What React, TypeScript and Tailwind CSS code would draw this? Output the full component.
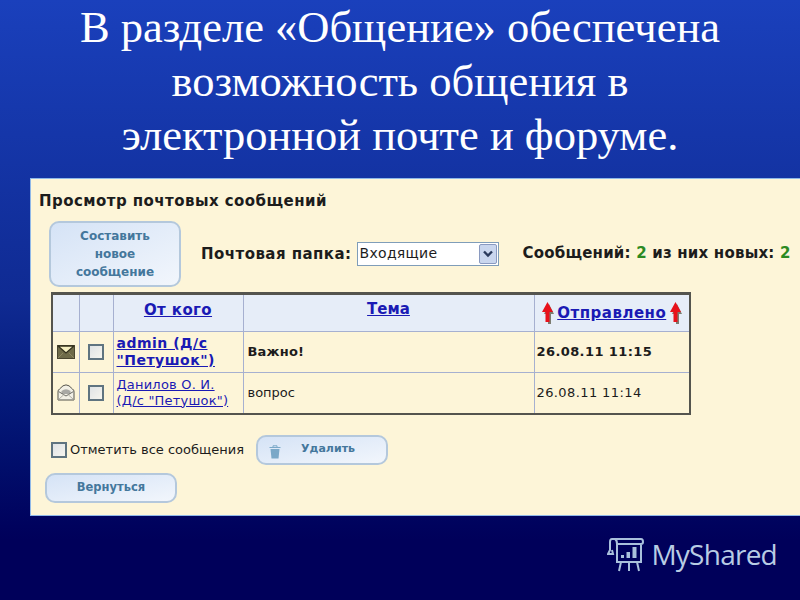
import React from "react";

const sans = "font-['DejaVu_Sans',sans-serif]";
const btn = "flex items-center justify-center rounded-[10px] border-2 border-[#b4c8dc] bg-gradient-to-br from-[#d5e3f6] to-[#f2f6fc] font-bold text-[#44779c]";

function Closed() {
  return (
    <svg width="18" height="14" viewBox="0 0 18 14">
      <rect x="0.5" y="0.5" width="17" height="13" fill="#6e6a48" stroke="#4a4630" />
      <path d="M1 1 L9 8 L17 1Z" fill="#f4eec0" />
      <path d="M1 1 H17 M1 1 L9 8 L17 1" fill="none" stroke="#35321f" strokeWidth="1.3" />
      <path d="M1 13 L6 8 M17 13 L12 8" stroke="#8c8660" fill="none" />
    </svg>
  );
}

function Opened() {
  return (
    <svg width="18" height="17" viewBox="0 0 18 17">
      <path d="M1 7.5 Q1 6 2.5 5 L6 1.8 Q9 0 12 1.8 L15.5 5 Q17 6 17 7.5 V16 H1Z" fill="#f2f0e6" stroke="#55544c" />
      <path d="M4.5 7 Q9 3.5 13.5 7 V10 H4.5Z" fill="#a8a8a4" />
      <path d="M1.5 7.5 L9 12 L16.5 7.5" fill="none" stroke="#6e6e68" />
      <path d="M1.5 15.5 L7 10.5 M16.5 15.5 L11 10.5" fill="none" stroke="#b0aea4" />
    </svg>
  );
}

function Box({ className = "" }: { className?: string }) {
  return <span className={"block w-[16px] h-[16px] border-2 border-[#5f7480] bg-gradient-to-br from-[#dfe3e6] to-[#f6f5ee] " + className} />;
}

function Arrow() {
  return (
    <svg width="13" height="24" viewBox="0 0 13 24" className="shrink-0">
      <path d="M8 3 L13 13 L10 13 L10 23 L7 23 L7 13 L3 13Z" fill="#7c7c70" />
      <path d="M6.5 1 L12 11 L8.5 11 L8.5 21 L4.5 21 L4.5 11 L1 11Z" fill="#e8111a" />
    </svg>
  );
}

function Logo() {
  return (
    <svg width="38" height="38" viewBox="0 0 38 38" fill="none" stroke="#a9c0dc" strokeWidth="2" className="shrink-0">
      <path d="M5 4 H34 Q36 4 36 7 Q36 9 34 9 H10 M5 4 Q3 4 3 7 V15 L1 19 H6 L5 15 M8 4 Q10 5 10 9 V27 H34 V9" />
      <path d="M14 27 L12 36 M22 27 V36 M30 27 L32 36" />
      <rect x="14" y="20" width="3" height="3" fill="#a9c0dc" stroke="none" />
      <rect x="19.5" y="17" width="3.5" height="6" fill="#a9c0dc" stroke="none" />
      <rect x="25.5" y="12" width="4" height="11" fill="#a9c0dc" stroke="none" />
    </svg>
  );
}

const cell = "border border-[#a6b0d0]";
const link = "text-[#1a1ab4] underline";

export default function App() {
  return (
    <div className="w-[800px] h-[600px] overflow-hidden flex flex-col bg-gradient-to-b from-[#1a40bc] via-[#0f2a92] via-50% to-[#00005a] to-90%">
      <h1 className="h-[178px] font-['Liberation_Serif',serif] font-normal text-white text-center text-[44.5px] leading-[54px] whitespace-nowrap">
        В разделе «Общение» обеспечена
        <br />
        возможность общения в
        <br />
        электронной почте и форуме.
      </h1>

      <div className={"ml-[30px] w-[770px] h-[338px] shrink-0 border border-[#8fb8e8] border-r-0 bg-[#fdf5d8] pl-[8px] pt-[14px] text-[#1c1c1c] " + sans}>
        <div className="text-[15px] font-bold leading-[17px] tracking-[0.45px] whitespace-nowrap">Просмотр почтовых сообщений</div>

        <div className="flex items-center mt-[11px] ml-[10px]">
          <div className={btn + " w-[132px] h-[66px] text-[12px] leading-[18px] text-center"}>
            Составить
            <br />
            новое
            <br />
            сообщение
          </div>
          <span className="ml-[20px] mt-[1px] text-[15px] tracking-[0.45px] font-bold whitespace-nowrap">Почтовая папка:</span>
          <div className="ml-[5px] mt-[-1px] w-[142px] h-[24px] border border-[#7f9db9] bg-white flex items-center justify-between">
            <span className="pl-[2px] text-[14px] tracking-[0.3px]">Входящие</span>
            <span className="w-[18px] h-[20px] mr-[1px] rounded-[2px] border border-[#8a9ac0] bg-[#c9d6ee] flex items-center justify-center">
              <svg width="10" height="8" viewBox="0 0 10 8"><path d="M1 1.5 L5 5.5 L9 1.5" fill="none" stroke="#2a3a5c" strokeWidth="2.4" /></svg>
            </span>
          </div>
          <span className="ml-[24px] mt-[-1px] text-[15px] tracking-[0.2px] font-bold whitespace-nowrap">
            Сообщений: <span className="text-[#2c8a22]">2</span> из них новых: <span className="text-[#2c8a22]">2</span>
          </span>
        </div>

        <table className="mt-[5px] ml-[12px] w-[638px] h-[120px] table-fixed border-collapse border-2 border-t-[3px] border-[#54544e] text-[13px]">
          <colgroup>
            <col className="w-[27px]" />
            <col className="w-[34px]" />
            <col className="w-[130px]" />
            <col className="w-[291px]" />
            <col className="w-[156px]" />
          </colgroup>
          <tbody>
            <tr className="h-[38px] bg-[#e6edf8]">
              <td className={cell} />
              <td className={cell} />
              <td className={cell + " text-center align-top pt-[4px] font-bold text-[15px] tracking-[0.4px]"}><span className={link}>От кого</span></td>
              <td className={cell + " text-center align-top pt-[3px] font-bold text-[15px]"}><span className={link}>Тема</span></td>
              <td className={cell}>
                <div className="flex items-center justify-center gap-[3px] font-bold text-[15px] tracking-[0.5px]">
                  <Arrow />
                  <span className={link}>Отправлено</span>
                  <Arrow />
                </div>
              </td>
            </tr>
            <tr className="h-[41px]">
              <td className={cell}><div className="flex justify-center"><Closed /></div></td>
              <td className={cell}><div className="flex justify-center"><Box /></div></td>
              <td className={cell + " pl-[3px] font-bold text-[14px] tracking-[0.5px] leading-[17px] whitespace-nowrap"}><span className={link}>admin (Д/с<br />"Петушок")</span></td>
              <td className={cell + " pl-[4px] font-bold text-[13px] tracking-[0.2px]"}>Важно!</td>
              <td className={cell + " pl-[2px] font-bold text-[13px] tracking-[0.4px] whitespace-nowrap"}>26.08.11 11:15</td>
            </tr>
            <tr className="h-[41px]">
              <td className={cell}><div className="flex justify-center"><Opened /></div></td>
              <td className={cell}><div className="flex justify-center"><Box /></div></td>
              <td className={cell + " pl-[3px] leading-[16px] text-[13px] tracking-[0.2px] whitespace-nowrap"}><span className={link}>Данилов О. И.<br />(Д/с "Петушок")</span></td>
              <td className={cell + " pl-[4px] text-[13px]"}>вопрос</td>
              <td className={cell + " pl-[2px] text-[13px] tracking-[0.4px] whitespace-nowrap"}>26.08.11 11:14</td>
            </tr>
          </tbody>
        </table>

        <div className="flex items-center mt-[20px] ml-[12px]">
          <Box />
          <span className="ml-[3px] text-[13px] whitespace-nowrap">Отметить все сообщения</span>
          <div className={btn + " relative ml-[12px] w-[132px] h-[30px] text-[11px] pl-[12px]"}>
            <svg width="12" height="14" viewBox="0 0 12 14" className="absolute left-[11px] top-[8px]">
              <path d="M0.5 2.5 H11.5 M4 2 V0.8 H8 V2" stroke="#7aa8c8" fill="none" />
              <path d="M1.5 4 H10.5 L9.5 13.5 H2.5Z" fill="#7aa8c8" />
            </svg>
            Удалить
          </div>
        </div>
        <div className={btn + " ml-[6px] mt-[8px] w-[132px] h-[30px] text-[11.5px]"}>Вернуться</div>
      </div>

      <div className="flex items-center justify-end gap-[6px] pr-[23px] mt-[19px]">
        <Logo />
        <span className="font-['Open_Sans',sans-serif] text-[28px] leading-[38px] text-[#b8cce4] tracking-[-0.75px]">MyShared</span>
      </div>
    </div>
  );
}
